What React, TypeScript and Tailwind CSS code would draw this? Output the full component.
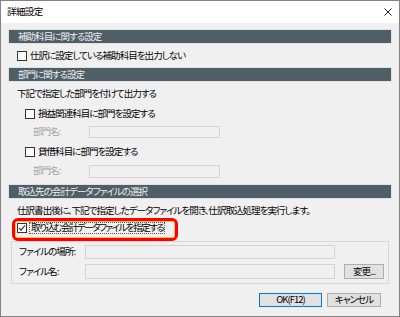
import React from "react";

const Check = ({ checked = false }: { checked?: boolean }) => (
  <span className="w-[10px] h-[10px] border border-[#333] bg-white flex items-center justify-center shrink-0">
    {checked && (
      <svg width="8" height="8" viewBox="0 0 8 8">
        <path d="M1 4.2 L3 6.2 L7 1.5" fill="none" stroke="#222" strokeWidth="1.1" />
      </svg>
    )}
  </span>
);

const Bar = ({ title }: { title: string }) => (
  <div className="mx-[7px] h-[15px] bg-[#4f5e67] border border-[#dde2e4] flex items-center pl-[9px] text-[#eef0f1]">
    {title}
  </div>
);

const Field = ({ className }: { className: string }) => (
  <div className={"border border-[#d4d4d4] bg-[#f0f0f0] " + className} />
);

const App = () => {
  return (
    <div className="w-[400px] h-[317px] bg-[#f0f0f0] border border-[#838383] flex flex-col font-['Noto_Sans_CJK_JP',sans-serif] text-[9.5px] tracking-[-0.95px] leading-none text-black [font-feature-settings:'palt']">
      {/* title */}
      <div className="h-[22px] bg-white flex items-center justify-between pl-[6px] pr-[6px]">
        <span className="text-[9.5px] tracking-[-0.6px]">詳細設定</span>
        <svg width="8" height="8" viewBox="0 0 8 8" className="mr-[1px]">
          <path d="M0.5 0.5 L7.5 7.5 M7.5 0.5 L0.5 7.5" stroke="#222" strokeWidth="1" />
        </svg>
      </div>

      <div className="mt-[6px]">
        <Bar title="補助科目に関する設定" />
      </div>
      <div className="h-[23px] flex items-center gap-[3px] pl-[16px]">
        <Check />
        <span>仕訳に設定している補助科目を出力しない</span>
      </div>

      <Bar title="部門に関する設定" />
      <div className="h-[24px] flex items-center pl-[16px]">下記で指定した部門を付けて出力する</div>
      <div className="h-[16px] flex items-center gap-[3px] pl-[24px]">
        <Check />
        <span>損益関連科目に部門を設定する</span>
      </div>
      <div className="h-[20px] flex items-center pl-[32px]">
        <span className="w-[56px] text-[#a3a3a3]">部門名:</span>
        <Field className="w-[131px] h-[12px]" />
      </div>
      <div className="h-[20px] flex items-center gap-[3px] pl-[24px]">
        <Check />
        <span>貸借科目に部門を設定する</span>
      </div>
      <div className="h-[18px] flex items-center pl-[32px]">
        <span className="w-[56px] text-[#a3a3a3]">部門名:</span>
        <Field className="w-[131px] h-[13px]" />
      </div>

      <div className="mt-[4px]">
        <Bar title="取込先の会計データファイルの選択" />
      </div>
      <div className="h-[23px] flex items-center pl-[16px]">
        仕訳書出後に、下記で指定したデータファイルを開き、仕訳取込処理を実行します。
      </div>
      <div className="relative h-[12px] flex items-center gap-[3px] pl-[16px]">
        <Check checked />
        <span className="outline outline-1 outline-dotted outline-[#555] px-px tracking-[-1.5px]">取り込む会計データファイルを指定する</span>
        <div className="absolute left-[11px] top-[-4px] w-[166px] h-[23px] border-[3px] border-[#ff0000] rounded-[6px]">
          <div className="w-full h-full border border-[#f6c445] rounded-[3px]" />
        </div>
      </div>

      <div className="mt-[7px] mx-[10px] h-[43px] border border-[#d7d7d7] flex flex-col pt-[3px] pl-[7px] gap-[5px]">
        <div className="flex items-center h-[14px]">
          <span className="w-[66px]">ファイルの場所:</span>
          <Field className="w-[250px] h-[14px]" />
        </div>
        <div className="flex items-center h-[15px]">
          <span className="w-[66px]">ファイル名:</span>
          <Field className="w-[250px] h-[15px]" />
          <button className="ml-[9px] w-[40px] h-[15px] bg-[#e1e1e1] border border-[#adadad] flex items-center justify-center">
            変更...
          </button>
        </div>
      </div>

      <div className="mt-[9px] flex justify-end gap-[5px] pr-[18px]">
        <button className="w-[63px] h-[14px] bg-[#e1e1e1] border border-[#0078d7] flex items-center justify-center">
          OK(F12)
        </button>
        <button className="w-[54px] h-[14px] bg-[#e1e1e1] border border-[#adadad] flex items-center justify-center">
          キャンセル
        </button>
      </div>
    </div>
  );
};

export default App;
